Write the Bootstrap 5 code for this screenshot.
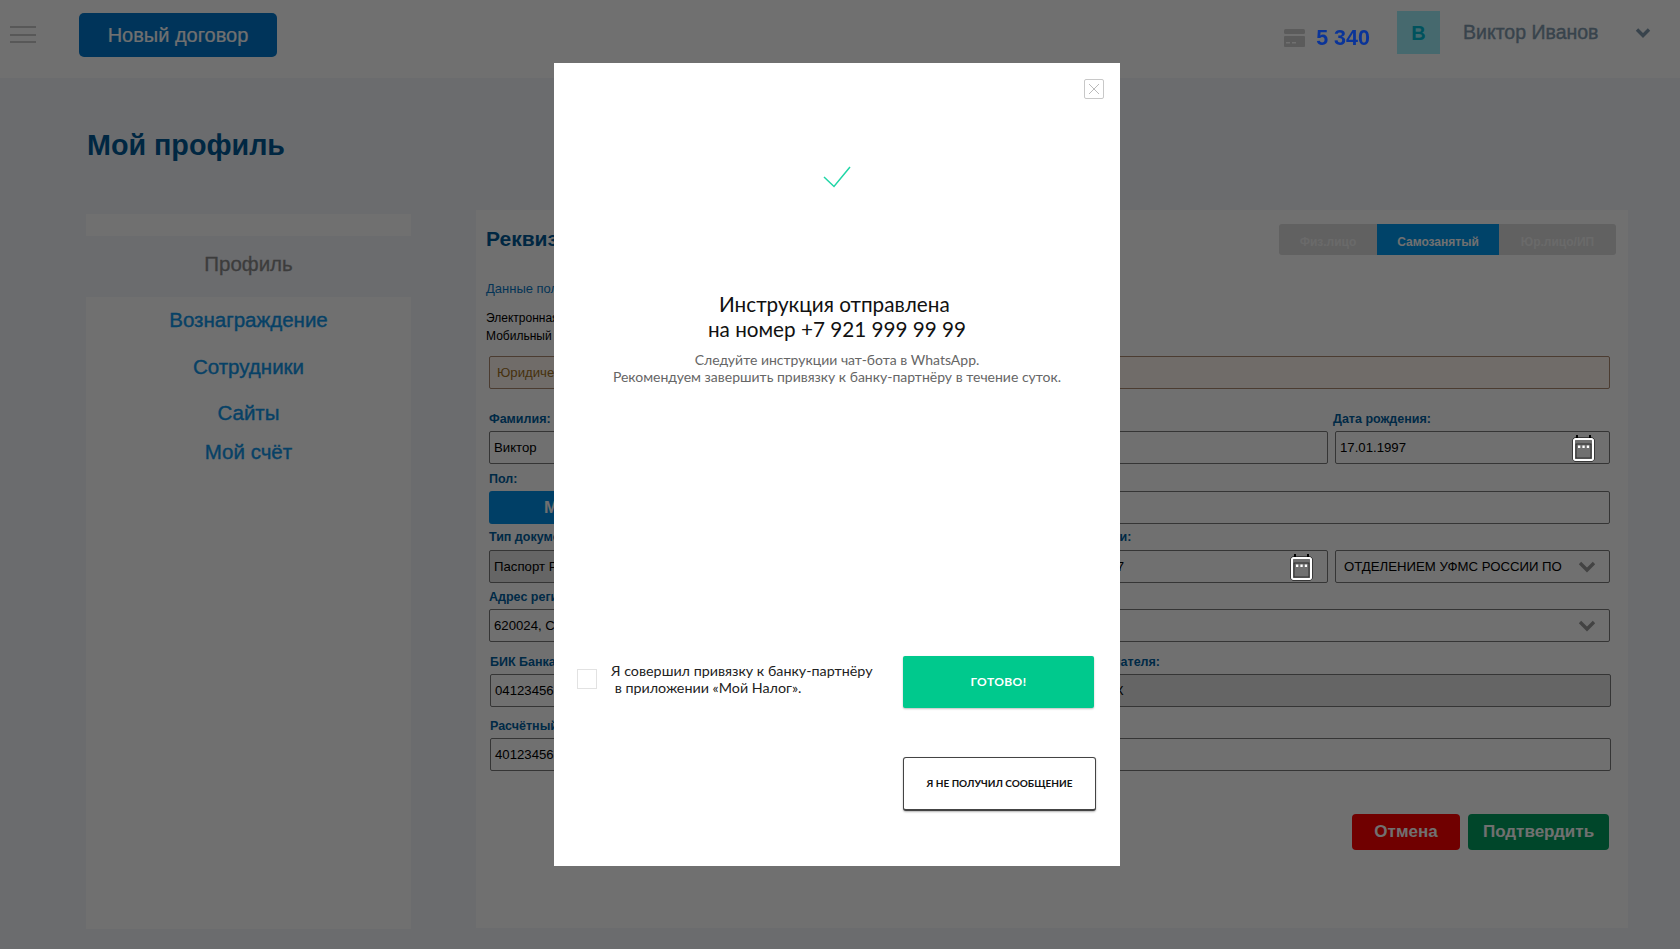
<!DOCTYPE html>
<html lang="ru">
<head>
<meta charset="utf-8">
<title>Мой профиль</title>
<link href="https://cdn.jsdelivr.net/npm/bootstrap@5.3.0/dist/css/bootstrap.min.css" rel="stylesheet">
<style>
html,body{height:949px;overflow:hidden}
body{background:#f3f5fa;font-family:"Liberation Sans",Arial,sans-serif;color:#000}
.topbar{height:78px;background:#fff;padding:0 29px 0 10px}
.burger{width:26px;height:17px;margin-top:-9px;border-top:2px solid #c9c9c9;border-bottom:2px solid #c9c9c9;position:relative;margin-right:43px}
.burger::after{content:"";position:absolute;left:0;right:0;top:6px;height:2px;background:#c9c9c9}
.new-btn{width:198px;height:44px;margin-top:-9px;background:#0077cc;border:0;border-radius:5px;color:#fff;font-size:20px;padding:0;-webkit-text-stroke:.2px}
.cardico{margin-top:-2px;margin-right:1px}
.balance{position:relative;z-index:1051;color:#0a3499;font-size:21.5px;font-weight:700;margin:-2px 27px 0 10px}
.ava{width:43px;height:43px;margin-top:-13px;background:#a0f0fa;color:#00bcd4;font-size:20px;font-weight:700;margin-right:23px}
.uname{font-size:19.5px;font-weight:500;color:#7f99ad;margin-top:-13px;width:172px;-webkit-text-stroke:.4px}
.page-h{font-size:28.7px;font-weight:700;color:#005a96;margin:49px 0 0 87px;line-height:36px;height:87px}
.wrap{padding:0 52px 0 86px;gap:65px}
.side{width:325px}
.side-stripe{height:22px;background:#fff}
.side-cur{height:61px;line-height:56px;text-align:center;font-size:20.500px;color:#8a8a8a;-webkit-text-stroke:.3px}
.side-list{background:#fff;height:632px;padding-top:9px;text-align:center;font-size:20.500px;color:#1095e8;-webkit-text-stroke:.4px}
.side-list div{height:46.500px;line-height:28px}
.side-list div:nth-child(3){height:39px}
.prof{width:1152px;height:718px;background:#fff;margin-top:-4px;padding:14px 15px 0 10px;position:relative}
.prof-t{font-size:21px;font-weight:700;color:#005a96;line-height:24px;margin-top:3px}
.seg{width:337px;height:31px;background:#dcdcdc;border-radius:3px;font-size:12px;font-weight:700;color:#f1f1f1;overflow:hidden;margin-right:-3px}
.seg div{line-height:36px;text-align:center}
.seg .on{background:#0098f0;color:#fff;width:122px}
.lnk{font-size:13px;color:#0a78c4;line-height:16px;margin-top:26px}
.mini{font-size:12px;line-height:18px;margin-top:12px}
.lab{font-size:12.5px;font-weight:700;color:#00609f;line-height:14px;margin-top:6px;height:14px;white-space:nowrap}
.lab-pt1{margin-top:23px}
.lab-pt2{margin-top:8px}
.lab-pt4{margin-top:7px}
.lab-pt5{margin-top:13px}
.lab-pt6{margin-top:12px}
.lab-pull{margin-left:-6px}
.lab-pull2{margin-left:-2px}
.lab-rec{padding-right:451px}
.fld{height:33px;border:1px solid #7a7a7a;border-radius:2px;background:#fff;font-size:13.2px;padding:0 4px;white-space:nowrap;overflow:hidden;margin-top:5px;color:#000}
.fld.gr{background:#e6e6e6}
.fld-t3{margin-top:6px}
.fld-rec{padding-left:284px}
.fgrid{display:grid;grid-template-columns:repeat(4,1fr);gap:0 7px;padding:0 3px}
.fgrid.b2{padding:0 2px 0 4px}
.span3{grid-column:span 3}
.span4{grid-column:1/-1}
.yur{margin:11px 3px 0;height:33px;border:1px solid #aa8a70;background:#fff5f0;border-radius:2px;color:#a07020;font-size:13.2px;padding:0 7px;line-height:31px}
.mbtn{width:184px;height:33px;margin-top:5px;background:#0090e8;border-radius:3px;color:#fff;font-size:17px;font-weight:700;line-height:33px;text-align:center}
.cal{position:relative;z-index:1051;flex:none;margin-right:9px}
.chev{flex:none;margin-right:9px}
.act{gap:8px;margin:43px 4px 0 0}
.act button{height:36px;border:0;border-radius:4px;color:#fff;font-size:17px;font-weight:700;padding:0}
.btn-cancel{width:108px;background:#ff0000}
.btn-conf{width:141px;background:#00a060}
.modal-backdrop.show{opacity:.56}
.dlg{width:566px;max-width:none;margin:63px 0 0 554px}
.dlg .modal-content{height:803px;border:0;border-radius:0;padding:0;font-family:Lato,"Noto Sans",sans-serif;display:flow-root;position:relative}
.xbtn{position:absolute;left:530px;top:16px;width:20px;height:20px;border:1px solid #c8c8c8;border-radius:2px;background:#fff;padding:0;line-height:0}
.tick{display:block;margin:103px auto 0}
.m-h{margin:104px 0 0;text-align:center;font-size:20.7px;line-height:25px;color:#111;font-weight:400}
.m-p{margin:9px 0 0;text-align:center;font-size:14px;line-height:17px;color:#666}
.m-bot{margin-top:271px;padding:0 26px 0 23px}
.chk{width:20px;height:20px;border:1px solid #e2e2e2;margin:13px 14px 0 0;flex:none}
.chk-t{width:272px;font-size:14.3px;line-height:17px;color:#222;margin-top:6px;white-space:pre-wrap}
.ok{width:191px;height:52px;background:#00c98d;border:0;border-radius:2px;color:#fff;font-size:12px;font-weight:700;letter-spacing:.4px;box-shadow:0 1px 2px rgba(0,0,0,.25);padding:0}
.no{display:block;margin:49px 24px 0 auto;width:193px;height:54px;background:#fff;border:1px solid #444;border-bottom-width:2px;border-radius:3px;color:#111;font-size:10px;font-weight:700;box-shadow:0 1px 2px rgba(0,0,0,.3);padding:0}
</style>
</head>
<body>
<svg width="0" height="0" class="position-absolute"><defs>
<symbol id="calico" viewBox="0 0 25 28">
  <path d="M6 1v4M19 1v4" stroke="#000" stroke-width="2"/>
  <rect x="2" y="4" width="21" height="23" rx="2" fill="none" stroke="#000" stroke-width="1"/>
  <rect x="3" y="5" width="19" height="21" rx="1.500" fill="none" stroke="#fff" stroke-width="2"/>
  <rect x="5" y="10" width="15" height="14" fill="none" stroke="#222" stroke-width=".8"/>
  <rect x="7" y="11.500" width="2.300" height="2.500" fill="#fff"/><rect x="11.400" y="11.500" width="2.300" height="2.500" fill="#fff"/><rect x="15.800" y="11.500" width="2.300" height="2.500" fill="#fff"/>
</symbol></defs></svg>
<header class="topbar d-flex align-items-center">
  <div class="burger"></div>
  <button class="new-btn">Новый договор</button>
  <div class="ms-auto d-flex align-items-center">
    <svg class="cardico" width="21" height="18" viewBox="0 0 21 18"><rect x="0" y="0" width="21" height="5" rx="1.5" fill="#cfcfcf"/><rect x="0" y="7" width="21" height="11" rx="1" fill="#cfcfcf"/><rect x="2" y="13" width="4" height="1.5" fill="#fff"/><rect x="8" y="13" width="4" height="1.5" fill="#fff"/></svg>
    <div class="balance">5 340</div>
    <div class="ava d-flex align-items-center justify-content-center">В</div>
    <div class="uname">Виктор Иванов</div>
    <svg width="16" height="12" viewBox="0 0 16 12" style="margin-top:-12px"><path d="M2 2.5 8 8.5 14 2.5" fill="none" stroke="#7f99ad" stroke-width="3.4"/></svg>
  </div>
</header>

<main>
  <h1 class="page-h">Мой профиль</h1>
  <div class="wrap d-flex align-items-start">
    <aside class="side">
      <div class="side-stripe"></div>
      <div class="side-cur">Профиль</div>
      <div class="side-list">
        <div>Вознаграждение</div><div>Сотрудники</div><div>Сайты</div><div>Мой счёт</div>
      </div>
    </aside>
    <section class="prof">
      <div class="d-flex justify-content-between align-items-start">
        <div class="prof-t">Реквизиты</div>
        <div class="seg d-flex">
          <div style="width:98px">Физ.лицо</div><div class="on">Самозанятый</div><div class="flex-fill">Юр.лицо/ИП</div>
        </div>
      </div>
      <div class="lnk">Данные пользователя</div>
      <div class="mini">Электронная почта<br>Мобильный телефон</div>
      <div class="yur">Юридический адрес</div>

      <div class="fgrid">
        <div><div class="lab lab-pt1">Фамилия:</div><div class="fld d-flex align-items-center">Виктор</div></div>
        <div><div class="lab lab-pt1">Имя:</div><div class="fld d-flex align-items-center">Иван</div></div>
        <div><div class="lab lab-pt1">Отчество:</div><div class="fld d-flex align-items-center"></div></div>
        <div><div class="lab lab-pt1 lab-pull2">Дата рождения:</div><div class="fld d-flex align-items-center justify-content-between"><span>17.01.1997</span><svg class="cal" width="25" height="28"><use href="#calico"/></svg></div></div>

        <div><div class="lab lab-pt2">Пол:</div><div class="mbtn">Мужской</div></div>
        <div class="span3"><div class="lab lab-pt2">&nbsp;</div><div class="fld"></div></div>

        <div><div class="lab">Тип документа:</div><div class="fld fld-t3 gr d-flex align-items-center">Паспорт РФ</div></div>
        <div><div class="lab">Серия и номер:</div><div class="fld fld-t3 d-flex align-items-center">7012 123456</div></div>
        <div><div class="lab lab-pull">Дата выдачи:</div><div class="fld fld-t3 d-flex align-items-center justify-content-between"><span>17.01.2017</span><svg class="cal" width="25" height="28"><use href="#calico"/></svg></div></div>
        <div><div class="lab">&nbsp;</div><div class="fld fld-t3 d-flex align-items-center justify-content-between ps-2"><span>ОТДЕЛЕНИЕМ УФМС РОССИИ ПО</span>
          <svg class="chev" width="18" height="12" viewBox="0 0 18 12"><path d="M2 2 9 9 16 2" fill="none" stroke="#999" stroke-width="3.4"/></svg></div></div>

        <div class="span4"><div class="lab lab-pt4">Адрес регистрации:</div><div class="fld d-flex align-items-center justify-content-between"><span>620024, Свердловская обл., г. Екатеринбург</span>
          <svg class="chev" width="18" height="12" viewBox="0 0 18 12"><path d="M2 2 9 9 16 2" fill="none" stroke="#999" stroke-width="3.4"/></svg></div></div>
      </div>

      <div class="fgrid b2">
        <div><div class="lab lab-pt5">БИК Банка:</div><div class="fld d-flex align-items-center">041234567</div></div>
        <div class="span3"><div class="lab lab-pt5 lab-rec text-end">Наименование получателя:</div><div class="fld fld-rec gr d-flex align-items-center">ИВАНОВ К</div></div>
        <div class="span4"><div class="lab lab-pt6">Расчётный счёт:</div><div class="fld d-flex align-items-center">40123456789012345678</div></div>
      </div>

      <div class="act d-flex justify-content-end">
        <button class="btn-cancel">Отмена</button>
        <button class="btn-conf">Подтвердить</button>
      </div>
    </section>
  </div>
</main>

<div class="modal-backdrop fade show"></div>
<div class="modal fade show d-block" tabindex="-1" role="dialog">
  <div class="modal-dialog dlg">
    <div class="modal-content">
      <button class="xbtn" aria-label="Закрыть"><svg width="18" height="18" viewBox="0 0 18 18"><path d="M4 4 14 14M14 4 4 14" stroke="#bbb" stroke-width="1" fill="none"/></svg></button>
      <svg class="tick" width="28" height="22" viewBox="0 0 28 22"><path d="M1 11 11 20.500 27 1" fill="none" stroke="#1fd6a6" stroke-width="1.5"/></svg>
      <h2 class="m-h">Инструкция отправлена&nbsp;<br>на номер +7 921 999 99 99</h2>
      <p class="m-p">Следуйте инструкции чат-бота в WhatsApp.<br>Рекомендуем завершить привязку к банку-партнёру в течение суток.</p>
      <div class="m-bot d-flex align-items-start">
        <div class="chk"></div>
        <div class="chk-t">Я совершил привязку к банку-партнёру
 в приложении «Мой Налог».</div>
        <button class="ok ms-auto">ГОТОВО!</button>
      </div>
      <button class="no">Я НЕ ПОЛУЧИЛ СООБЩЕНИЕ</button>
    </div>
  </div>
</div>
<script src="https://cdn.jsdelivr.net/npm/bootstrap@5.3.0/dist/js/bootstrap.bundle.min.js"></script>
</body>
</html>
